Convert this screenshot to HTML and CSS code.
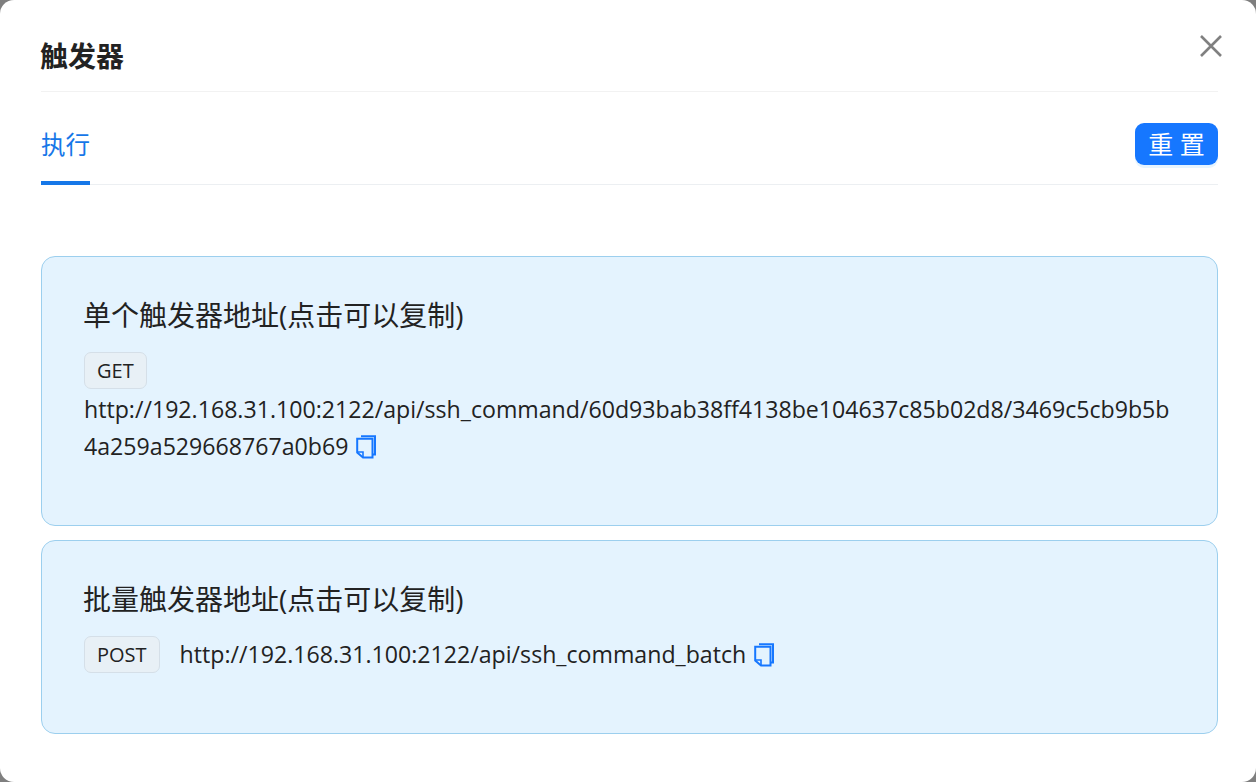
FILE: index.html
```html
<!DOCTYPE html>
<html lang="zh">
<head>
<meta charset="utf-8">
<title>触发器</title>
<link rel="stylesheet" href="styles.css">
</head>
<body>
<div class="modal">
  <header class="modal-header">
    <h1 class="modal-title">触发器</h1>
    <button class="close" aria-label="关闭">
      <svg width="24" height="24" viewBox="0 0 24 24"><path d="M2 2 22 22M22 2 2 22" fill="none" stroke="#808080" stroke-width="2.6"/></svg>
    </button>
  </header>
  <nav class="tabs">
    <div class="tab">执行</div>
    <button class="reset">重 置</button>
  </nav>
  <section class="cards">
    <article class="card card-single">
      <h2 class="card-title">单个触发器地址(点击可以复制)</h2>
      <div class="card-body"><span class="tag">GET</span> http://192.168.31.100:2122/api/ssh_command/60d93bab38ff4138be104637c85b02d8/3469c5cb9b5b4a259a529668767a0b69 <svg class="copy" width="20" height="24" viewBox="0 0 20 24"><path d="M5 1.2H19V19.5H16.5" fill="none" stroke="#1677ff" stroke-width="2"/><path d="M2.5 3.8H16.5V22.5H7L1.2 17.5V3.8Z" fill="none" stroke="#1677ff" stroke-width="2"/><path d="M1.5 17H7V22" fill="none" stroke="#1677ff" stroke-width="1.6"/></svg></div>
    </article>
    <article class="card card-batch">
      <h2 class="card-title">批量触发器地址(点击可以复制)</h2>
      <div class="card-body"><span class="tag">POST</span> http://192.168.31.100:2122/api/ssh_command_batch <svg class="copy" width="20" height="24" viewBox="0 0 20 24"><path d="M5 1.2H19V19.5H16.5" fill="none" stroke="#1677ff" stroke-width="2"/><path d="M2.5 3.8H16.5V22.5H7L1.2 17.5V3.8Z" fill="none" stroke="#1677ff" stroke-width="2"/><path d="M1.5 17H7V22" fill="none" stroke="#1677ff" stroke-width="1.6"/></svg></div>
    </article>
  </section>
</div>
</body>
</html>
```
FILE: styles.css
```css
* { box-sizing: border-box; }
html, body { margin: 0; height: 100%; }
body {
  background: #7f7f7f;
  font-family: "Open Sans", "Noto Sans CJK SC", sans-serif;
  color: rgba(0,0,0,.88);
  overflow: hidden;
}
.modal {
  height: 782px;
  background: #fff;
  border-radius: 14px;
  padding: 0 38px 0 41px;
}
.modal-header {
  height: 92px;
  display: flex;
  justify-content: space-between;
  align-items: flex-start;
  border-bottom: 1px solid #f2f2f2;
}
.modal-title {
  margin: 36px 0 0 -1px;
  font-size: 28px;
  line-height: 40px;
  font-weight: 700;
  color: #222;
}
.close {
  border: 0;
  background: none;
  padding: 0;
  margin: 34px -5px 0 0;
  width: 24px;
  height: 24px;
}
.tabs {
  height: 93px;
  display: flex;
  justify-content: space-between;
  align-items: flex-start;
  border-bottom: 1px solid #eceff2;
}
.tab {
  height: 93px;
  width: 49px;
  padding-top: 34px;
  font-size: 24.5px;
  line-height: 37px;
  color: #1677e8;
  border-bottom: 4px solid #1677e8;
  white-space: nowrap;
}
.reset {
  margin-top: 31px;
  width: 83px;
  height: 42px;
  border: 0;
  border-radius: 9px;
  background: #1677ff;
  color: #fff;
  font: 25px/42px "Open Sans", "Noto Sans CJK SC", sans-serif;
  padding: 0;
  box-shadow: 0 3px 0 rgba(5,145,255,.1);
}
.cards {
  margin-top: 71px;
  display: flex;
  flex-direction: column;
  gap: 14px;
}
.card {
  background: #e4f3fe;
  border: 1px solid #9ccfee;
  border-radius: 14px;
  padding: 38px 41px 0 42px;
}
.card-single { height: 270px; }
.card-batch { height: 194px; }
.card-title {
  margin: 0 0 17px -1px;
  font-size: 28px;
  line-height: 40px;
  font-weight: 400;
  color: #222;
}
.card-body {
  font-size: 23.15px;
  line-height: 37px;
  overflow-wrap: break-word;
  color: #222;
}
.tag {
  display: inline-block;
  height: 37px;
  line-height: 36px;
  padding: 0 12px;
  margin: 0 14px 2px 0;
  font-size: 20px;
  background: #e8f0f6;
  border: 1px solid #d5dfe8;
  border-radius: 7px;
  vertical-align: top;
}
.copy { vertical-align: -4px; margin-left: 2px; }
```
